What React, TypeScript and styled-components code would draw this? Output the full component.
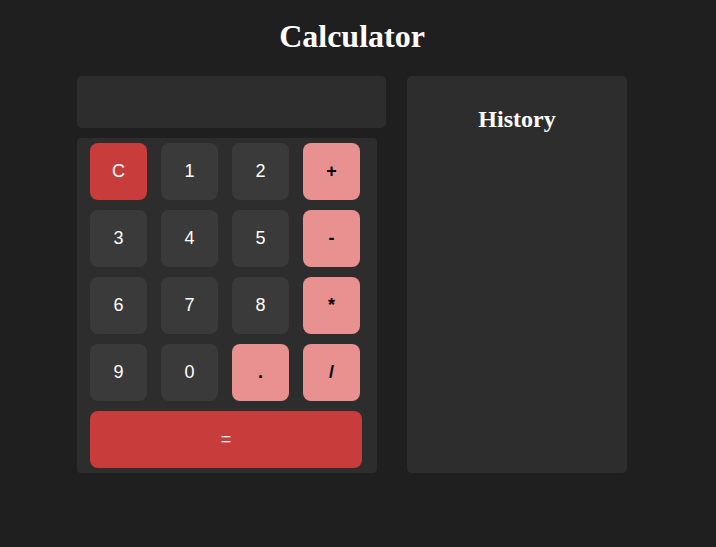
import React from "react";
import styled, { createGlobalStyle } from "styled-components";

const GlobalStyle = createGlobalStyle`
  html, body {
    margin: 0;
    padding: 0;
    background: #1f1f1f;
  }
  body {
    font-family: "Liberation Serif", "Times New Roman", serif;
    color: #ffffff;
  }
`;

const Page = styled.div`
  width: 704px;
  padding-top: 18px;
  display: flex;
  flex-direction: column;
  align-items: center;
`;

const Title = styled.h1`
  margin: 0 0 21px;
  font-family: "Liberation Serif", "Times New Roman", serif;
  font-size: 32px;
  font-weight: bold;
  line-height: 37px;
  color: #ffffff;
`;

const Main = styled.div`
  display: flex;
  align-items: stretch;
  gap: 21px;
`;

const CalcColumn = styled.div`
  display: flex;
  flex-direction: column;
  align-items: flex-start;
  gap: 10px;
`;

const Display = styled.div`
  width: 309px;
  height: 52px;
  background: #2d2d2d;
  border-radius: 5px;
`;

const Keypad = styled.div`
  width: 300px;
  box-sizing: border-box;
  padding: 5px 15px 5px 13px;
  background: #2d2d2d;
  border-radius: 4px;
  display: grid;
  grid-template-columns: repeat(4, 57px);
  grid-auto-rows: 57px;
  column-gap: 14px;
  row-gap: 10px;
`;

type Variant = "num" | "op" | "danger";

const Key = styled.button<{ $variant: Variant; $wide?: boolean }>`
  border: none;
  border-radius: 8px;
  padding: 0;
  width: ${(p) => (p.$wide ? "272px" : "57px")};
  height: 57px;
  grid-column: ${(p) => (p.$wide ? "1 / -1" : "auto")};
  font-family: "Liberation Sans", Arial, sans-serif;
  font-size: 18px;
  font-weight: ${(p) => (p.$variant === "op" ? "bold" : "normal")};
  cursor: pointer;
  display: flex;
  align-items: center;
  justify-content: center;
  background: ${(p) =>
    p.$variant === "num" ? "#3a3a3a" : p.$variant === "op" ? "#e99090" : "#c83c3c"};
  color: ${(p) => (p.$variant === "op" ? "#000000" : "#ffffff")};
`;

const HistoryPanel = styled.div`
  width: 220px;
  background: #2d2d2d;
  border-radius: 5px;
  display: flex;
  flex-direction: column;
  align-items: center;
`;

const HistoryTitle = styled.h2`
  margin: 29px 0 0;
  font-family: "Liberation Serif", "Times New Roman", serif;
  font-size: 24px;
  font-weight: bold;
  line-height: 28px;
  color: #ffffff;
`;

const keys: { label: string; variant: Variant }[] = [
  { label: "C", variant: "danger" },
  { label: "1", variant: "num" },
  { label: "2", variant: "num" },
  { label: "+", variant: "op" },
  { label: "3", variant: "num" },
  { label: "4", variant: "num" },
  { label: "5", variant: "num" },
  { label: "-", variant: "op" },
  { label: "6", variant: "num" },
  { label: "7", variant: "num" },
  { label: "8", variant: "num" },
  { label: "*", variant: "op" },
  { label: "9", variant: "num" },
  { label: "0", variant: "num" },
  { label: ".", variant: "op" },
  { label: "/", variant: "op" },
];

export default function App() {
  return (
    <>
      <GlobalStyle />
      <Page>
        <Title>Calculator</Title>
        <Main>
          <CalcColumn>
            <Display />
            <Keypad>
              {keys.map((k) => (
                <Key key={k.label} $variant={k.variant}>
                  {k.label}
                </Key>
              ))}
              <Key $variant="danger" $wide>
                =
              </Key>
            </Keypad>
          </CalcColumn>
          <HistoryPanel>
            <HistoryTitle>History</HistoryTitle>
          </HistoryPanel>
        </Main>
      </Page>
    </>
  );
}
